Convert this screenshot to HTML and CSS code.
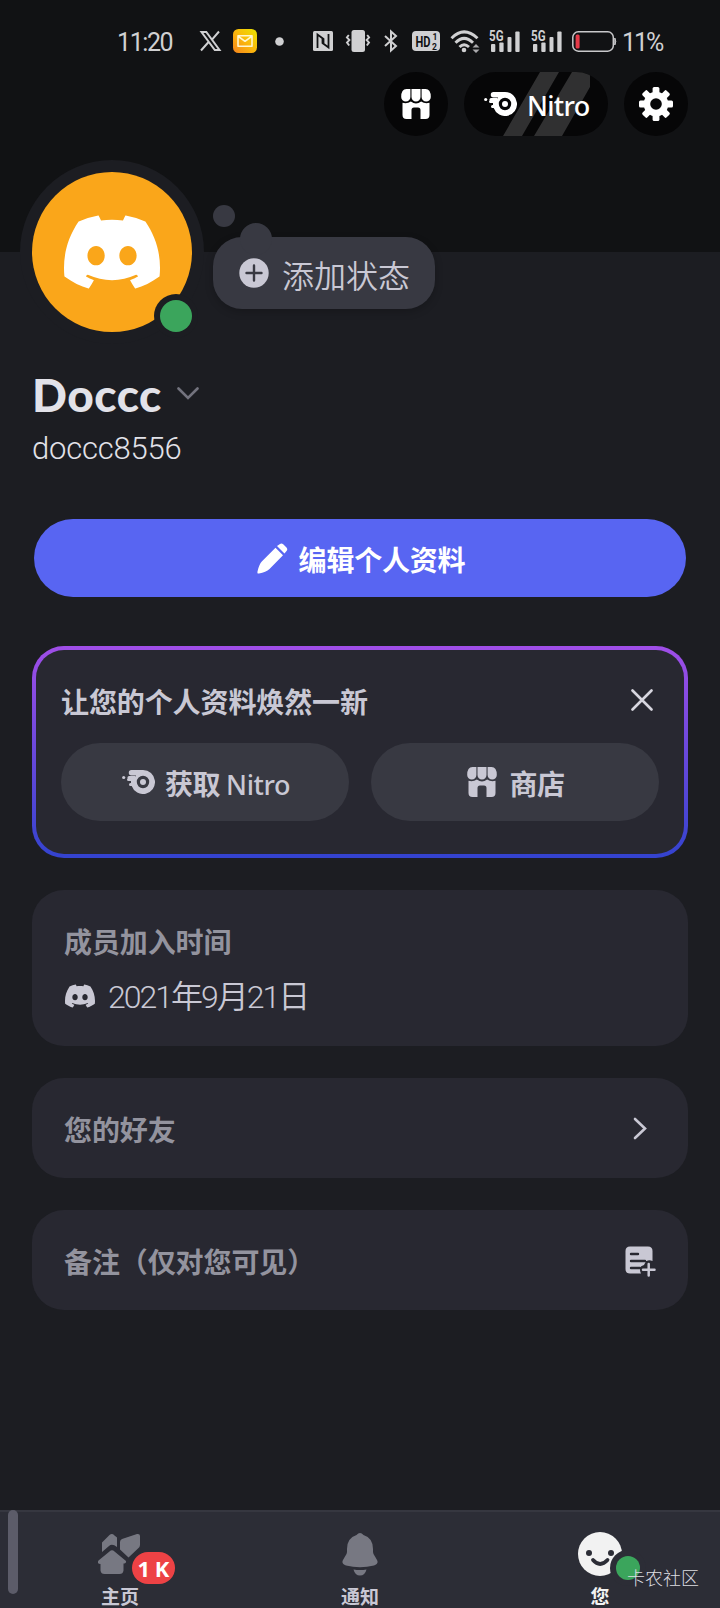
FILE: index.html
```html
<!DOCTYPE html>
<html lang="zh-CN">
<head>
<meta charset="utf-8">
<title>Profile</title>
<link rel="stylesheet" href="styles.css">
</head>
<body>
<svg class="defs" width="0" height="0">
  <symbol id="discord" viewBox="0 0 24 24"><path d="M20.317 4.3698a19.7913 19.7913 0 00-4.8851-1.5152.0741.0741 0 00-.0785.0371c-.211.3753-.4447.8648-.6083 1.2495-1.8447-.2762-3.68-.2762-5.4868 0-.1636-.3933-.4058-.8742-.6177-1.2495a.077.077 0 00-.0785-.037 19.7363 19.7363 0 00-4.8852 1.515.0699.0699 0 00-.0321.0277C.5334 9.0458-.319 13.5799.0992 18.0578a.0824.0824 0 00.0312.0561c2.0528 1.5076 4.0413 2.4228 5.9929 3.0294a.0777.0777 0 00.0842-.0276c.4616-.6304.8731-1.2952 1.226-1.9942a.076.076 0 00-.0416-.1057c-.6528-.2476-1.2743-.5495-1.8722-.8923a.077.077 0 01-.0076-.1277c.1258-.0943.2517-.1923.3718-.2914a.0743.0743 0 01.0776-.0105c3.9278 1.7933 8.18 1.7933 12.0614 0a.0739.0739 0 01.0785.0095c.1202.099.246.1981.3728.2924a.077.077 0 01-.0066.1276 12.2986 12.2986 0 01-1.873.8914.0766.0766 0 00-.0407.1067c.3604.698.7719 1.3628 1.225 1.9932a.076.076 0 00.0842.0286c1.961-.6067 3.9495-1.5219 6.0023-3.0294a.077.077 0 00.0313-.0552c.5004-5.177-.8382-9.6739-3.5485-13.6604a.061.061 0 00-.0312-.0286zM8.02 15.3312c-1.1825 0-2.1569-1.0857-2.1569-2.419 0-1.3332.9555-2.4189 2.157-2.4189 1.2108 0 2.1757 1.0952 2.1568 2.419 0 1.3332-.9555 2.4189-2.1569 2.4189zm7.9748 0c-1.1825 0-2.1569-1.0857-2.1569-2.419 0-1.3332.9554-2.4189 2.1569-2.4189 1.2108 0 2.1757 1.0952 2.1568 2.419 0 1.3332-.946 2.4189-2.1568 2.4189Z"/></symbol>
  <symbol id="store" viewBox="0 0 30 30"><path d="M5.500 0H9.400V8A4.600 4.600 0 0 1 .2 8Q.2 0 5.500 0ZM10.500 0H19.500V8A4.500 4.500 0 0 1 10.500 8ZM24.500 0H20.600V8A4.600 4.600 0 0 0 29.800 8Q29.800 0 24.500 0Z"/><path d="M1.500 13.700Q6 15 9.900 12.500 15 16.500 20.100 12.500 24 15 28.500 13.700V26Q28.500 30 24.500 30H19.500V21Q19.500 18.500 17 18.500H13Q10.500 18.500 10.500 21V30H5.500Q1.500 30 1.500 26Z"/></symbol>
  <symbol id="nitro" viewBox="0 0 33 24"><path fill-rule="evenodd" d="M9.500 0H21A12 12 0 1 1 9.700 16H8.500A1.500 1.500 0 0 1 8.500 13H9V11H6.500A1.500 1.500 0 0 1 6.500 8H14V5.500H9.500A2.700 2.700 0 0 1 9.500 0ZM21 5.800A6.200 6.200 0 1 0 21 18.200 6.200 6.200 0 1 0 21 5.800Z"/><circle cx="21" cy="12" r="3"/><circle cx="1.700" cy="7.500" r="1.600"/><rect x="5.500" y="6" width="9" height="3" rx="1.500"/></symbol>
  <symbol id="bars" viewBox="0 0 31 22"><rect x="2" y="14" width="4.300" height="8" rx="1"/><rect x="10.300" y="12.500" width="4.300" height="9.500" rx="1"/><rect x="18.500" y="7" width="4" height="15" rx="1"/><rect x="26.300" y="1.500" width="4.300" height="20.500" rx="1"/></symbol>
</svg>
<div class="page">
  <header class="statusbar">
    <span class="time">11:20</span>
    <svg class="i-x" width="21" height="20" viewBox="0 0 21 20"><path d="M1.500 1H6.300L19.500 19H14.800ZM19 .5 12 8.600M1 19.500 8.600 11" fill="none" stroke="currentColor" stroke-width="2"/></svg>
    <svg class="i-mail" width="24" height="24" viewBox="0 0 24 24"><defs><linearGradient id="mailfill" x1="1" y1="0" x2="0" y2="1"><stop offset="0" stop-color="#e9e500"/><stop offset=".5" stop-color="#fbb80c"/><stop offset="1" stop-color="#f4831c"/></linearGradient></defs><rect width="24" height="24" rx="5.500" fill="url(#mailfill)"/><path d="M5 6.800H19V17.200H5ZM5.500 7.500 12 12.300 18.500 7.500" fill="none" stroke="#fff6cf" stroke-width="1.600" stroke-linejoin="round"/></svg>
    <svg class="i-dot" width="9" height="9"><circle cx="4.500" cy="4.500" r="4.300" fill="currentColor"/></svg>
    <svg class="i-nfc" width="20" height="20" viewBox="0 0 20 20"><rect width="20" height="20" rx="1.500" fill="currentColor"/><path d="M4.500 17V3.500L10.500 8V13.500M15.500 3V16.500L9.500 12V6.500" fill="none" stroke="#111214" stroke-width="1.800"/></svg>
    <svg class="i-vib" width="24" height="22" viewBox="0 0 24 22"><rect x="5.500" width="13.500" height="22" rx="2.500" fill="currentColor"/><path d="M2.800 5 .9 7.500 3.400 10 1 12.500 3.200 15.500M21.200 5 23.100 7.500 20.600 10 23 12.500 20.800 15.500" fill="none" stroke="currentColor" stroke-width="1.900"/></svg>
    <svg class="i-bt" width="14" height="22" viewBox="0 0 14 22"><path d="M1 6 12 16 7 20.500V1.500L12 6 1 16" fill="none" stroke="currentColor" stroke-width="2"/></svg>
    <svg class="i-hd" width="28" height="20" viewBox="0 0 28 20"><rect width="28" height="20" rx="4" fill="currentColor"/><g fill="#111214"><text class="hd-text" x="3.500" y="15.500" textLength="15" lengthAdjust="spacingAndGlyphs">HD</text><text class="hd-num" x="20.500" y="8.500">1</text><text class="hd-num" x="20" y="18.500">2</text></g></svg>
    <svg class="i-wifi" width="30" height="23" viewBox="0 0 30 23"><g fill="none" stroke="currentColor" stroke-width="2.900"><path d="M1.500 8.200Q14-4.500 27.500 8.200M5.500 12.700Q14 4 23 12.700M9.500 17Q14 12.500 19 17"/></g><circle cx="14" cy="20" r="2.300" fill="currentColor"/><path d="M26 14 29.500 17.500H22.500ZM26 23 29.500 19.500H22.500Z" fill="#aaa9ac"/></svg>
    <svg class="i-sig1" width="31" height="22" fill="currentColor"><use href="#bars"/><text class="signal-text" x="0" y="10.500" textLength="14.500" lengthAdjust="spacingAndGlyphs">5G</text></svg>
    <svg class="i-sig2" width="31" height="22" fill="currentColor"><use href="#bars"/><text class="signal-text" x="0" y="10.500" textLength="14.500" lengthAdjust="spacingAndGlyphs">5G</text></svg>
    <svg class="i-bat" width="45" height="21" viewBox="0 0 45 21"><rect x=".8" y=".8" width="40.500" height="19.400" rx="5.500" fill="none" stroke="#c9c9cb" stroke-width="1.500"/><rect x="3.600" y="3.500" width="4" height="14" rx="1.500" fill="#e53a48"/><path d="M42.800 7Q44.800 10.500 42.800 14Z" fill="#c9c9cb" stroke="#c9c9cb"/></svg>
    <span class="percent">11%</span>
  </header>

  <nav class="actions">
    <button class="round"><svg width="30" height="30"><use href="#store"/></svg></button>
    <button class="nitro">
      <svg class="stripes" width="144" height="64"><path d="M76 0H95L58 64H39ZM108 0H126V15L98 64H70Z" fill="#303031"/></svg>
      <svg class="nitro-icon" width="33" height="24"><use href="#nitro"/></svg><span>Nitro</span>
    </button>
    <button class="round"><svg width="34" height="34" viewBox="0 0 34 34"><g transform="translate(17 17)"><g id="teeth"><rect x="-3.400" y="-17" width="6.800" height="34" rx="1.500"/><rect x="-17" y="-3.400" width="34" height="6.800" rx="1.500"/></g><use href="#teeth" transform="rotate(45)"/><circle r="12.300"/><circle r="5.800" fill="#060607"/></g></svg></button>
  </nav>

  <section class="identity">
    <div class="avatar"><svg width="96" height="96"><use href="#discord"/></svg><i class="online"></i></div>
    <div class="bubble"><i class="puff small"></i><i class="puff large"></i>
      <svg width="30" height="30" viewBox="0 0 30 30"><circle cx="15" cy="15" r="14.700" fill="#c9c8d4"/><path d="M15 7.500V22.500M7.500 15H22.500" stroke="#383942" stroke-width="2.400" stroke-linecap="round"/></svg><span>添加状态</span></div>
  </section>

  <section class="names">
    <h1><span>Doccc</span><svg width="22" height="13" viewBox="0 0 22 13"><path d="M1.500 1.500 11 11 20.500 1.500" fill="none" stroke="#73737e" stroke-width="2.600" stroke-linecap="round"/></svg></h1>
    <p>doccc8556</p>
  </section>

  <button class="edit"><svg width="31" height="31" viewBox="0 0 31 31"><path d="M20 3 23 1Q24.500-.2 26.500 1.500L29.500 4.500Q31 6.500 29.500 8L27.500 10.500ZM18.500 4.800 26 12.300 12.500 26Q9 29 2 30.500 0 31 .5 28.500 2 21.500 5 18.300Z"/></svg><span>编辑个人资料</span></button>

  <section class="promo">
    <div class="promo-head"><h2>让您的个人资料焕然一新</h2><svg width="22" height="22" viewBox="0 0 22 22"><path d="M1.500 1.500 20.500 20.500M20.500 1.500 1.500 20.500" stroke="#d7d6df" stroke-width="2.600" stroke-linecap="round"/></svg></div>
    <div class="promo-buttons">
      <button><svg width="33" height="24"><use href="#nitro"/></svg><span>获取 <b>Nitro</b></span></button>
      <button class="shop"><svg width="30" height="30"><use href="#store"/></svg><span>商店</span></button>
    </div>
  </section>

  <section class="card member">
    <h2>成员加入时间</h2>
    <p><svg width="30" height="30"><use href="#discord"/></svg><span>2021年9月21日</span></p>
  </section>
  <section class="card line"><h2>您的好友</h2><svg class="chevron" width="14" height="23" viewBox="0 0 14 23"><path d="M2 2 12 11.500 2 21" fill="none" stroke="#c9c8d4" stroke-width="2.600" stroke-linecap="round"/></svg></section>
  <section class="card line"><h2>备注（仅对您可见）</h2><svg class="note" width="31" height="31" viewBox="0 0 31 31"><path d="M5 .5H23Q27.500.5 27.500 5V15Q21.500 12.500 19 19 13 21 16 27.500H5Q.5 27.500.5 23V5Q.5.5 5 .5Z" fill="#c9c8d4"/><path d="M6 8H13M6 15H20M6 22H15" stroke="#282831" stroke-width="2.400" stroke-linecap="round"/><path d="M23.700 15V31M16 23.500H31" stroke="#282831" stroke-width="6"/><path d="M23.700 18V29.500M18 23.700H29.500" stroke="#c9c8d4" stroke-width="2.500" stroke-linecap="round"/></svg></section>

  <footer class="tabs">
    <i class="scroll"></i>
    <div class="tab"><svg width="44" height="44" viewBox="0 0 44 44" fill="#777882"><path d="M4 10.500 11.500 3Q14 1 16.500 3.500L19 5.500V15Q14 11 11 14L4 20Z"/><path d="M22 10Q22 8 24 7L39 2Q42 1.500 42 4V13Q42 15 40 16.500L30.500 25.500 22 17.500Z"/><path d="M11.500 19.500Q14 17 16.500 19.500L28 29Q28.500 32 25.500 31.500V38.500Q25 42 21.500 42H6.500Q3 42 2.500 38.500V32Q-1.500 32 .5 28.500Z"/></svg><span>主页</span><b class="badge">1 K</b></div>
    <div class="tab"><svg width="36" height="44" viewBox="0 0 36 44" fill="#777882"><path d="M14.500 3Q18-1 21.500 3 31 6 31 17V20Q31 22 33 24.500L35 28Q37 32 32 33.500 18 37 4 33.500-1 32 1 28L3 24.500Q5 22 5 20V17Q5 6 14.500 3ZM11.500 37.500Q18 38.500 24.500 37.500 23 43.500 18 43.500T11.500 37.500Z"/></svg><span>通知</span></div>
    <div class="tab active"><svg width="44" height="44" viewBox="0 0 44 44"><circle cx="22" cy="22" r="22" fill="#f2f2f2"/><circle cx="11" cy="21" r="3" fill="#2c2d36"/><circle cx="33" cy="21" r="3" fill="#2c2d36"/><path d="M15 28Q22 36 29.500 28" fill="none" stroke="#2c2d36" stroke-width="3.800" stroke-linecap="round"/></svg><span>您</span><i class="online mini"></i></div>
    <span class="mark">卡农社区</span>
  </footer>
</div>
</body>
</html>
```
FILE: styles.css
```css
* { box-sizing: border-box; }
body { margin: 0; background: #1c1d22; color: #c9c8d4; font-family: "Noto Sans CJK SC", sans-serif; }
h1, h2, p { margin: 0; }
button { border: 0; padding: 0; font: inherit; color: inherit; }
svg { display: block; flex: none; }
.defs { position: absolute; }
.page { width: 720px; height: 1608px; display: flex; flex-direction: column; overflow: hidden; background: linear-gradient(#111214 252px, #1c1d22 252px); }

.statusbar { height: 72px; padding: 10px 0 0 117px; display: flex; align-items: center; color: #d0d0d2; flex: none; }
.statusbar svg { color: #d0d0d2; overflow: visible; }
.time, .percent { font: 25px/30px Roboto, sans-serif; white-space: nowrap; padding-top: 3px; }
.time { width: 56px; letter-spacing: -1.4px; }
.percent { margin-left: 5px; letter-spacing: -2px; }
.i-x { margin-left: 27px; }
.i-mail { margin-left: 12px; }
.i-dot { margin-left: 18px; }
.i-nfc { margin-left: 29px; }
.i-vib { margin-left: 13px; }
.i-bt { margin-left: 14px; }
.i-hd { margin-left: 14px; }
.i-wifi { margin-left: 10px; }
.i-sig1 { margin-left: 9px; }
.i-sig2 { margin-left: 11px; }
.i-bat { margin-left: 10px; }
.signal-text { font: 700 14px Roboto, sans-serif; }
.hd-text { font: 700 14px Roboto, sans-serif; }
.hd-num { font: 700 8.5px/9px Roboto, sans-serif; }

.actions { display: flex; justify-content: flex-end; gap: 16px; padding-right: 32px; height: 64px; flex: none; }
.actions button { height: 64px; border-radius: 32px; background: #060607; color: #fff; fill: #fff; display: flex; align-items: center; justify-content: center; }
.actions .round { width: 64px; }
.actions .nitro { width: 144px; position: relative; overflow: hidden; font: 500 27px/36px "Noto Sans", sans-serif; justify-content: flex-start; padding-left: 20px; gap: 10px; }
.nitro span { position: relative; top: 2px; letter-spacing: -.7px; }
.nitro-icon { position: relative; }
.stripes { position: absolute; left: 0; top: 0; }

.identity { display: flex; align-items: flex-start; padding: 36px 32px 0; height: 196px; flex: none; }
.avatar { width: 160px; height: 160px; border-radius: 50%; background: #faa61a; box-shadow: 0 0 0 12px #1c1d22; fill: #fff; display: flex; align-items: center; justify-content: center; position: relative; }
.online { position: absolute; right: 0; bottom: 0; width: 32px; height: 32px; border-radius: 50%; background: #3ba55c; box-shadow: 0 0 0 6px #1c1d22; }
.bubble { position: relative; margin: 65px 0 0 21px; width: 222px; height: 72px; border-radius: 29px; background: #383942; display: flex; align-items: center; gap: 13px; padding-left: 26px; font-size: 32px; font-weight: 350; box-shadow: 0 3px 8px rgba(0,0,0,.2); }
.bubble span { line-height: 40px; padding-top: 2px; }
.puff { position: absolute; border-radius: 50%; background: #383942; }
.puff.small { width: 22px; height: 22px; left: 0; top: -32px; }
.puff.large { width: 32px; height: 32px; left: 27px; top: -14px; }

.names { padding: 38px 32px 0; height: 187px; flex: none; }
.names h1 { display: flex; align-items: center; gap: 15px; font: 900 46px/50px Lato, sans-serif; letter-spacing: .5px; color: #e2e2e9; }
.names h1 svg { margin-bottom: 4px; }
.names p { font: 300 31px/38px Roboto, sans-serif; letter-spacing: -.2px; color: #e2e2e9; margin-top: 10px; }

.edit { margin: 0 34px; height: 78px; border-radius: 39px; background: #5865f2; color: #fff; fill: #fff; display: flex; align-items: center; justify-content: center; gap: 11px; font-size: 28px; font-weight: 700; padding-left: 2px; flex: none; }
.edit span { padding-top: 2px; letter-spacing: -.2px; }

.promo { margin: 49px 32px 0; height: 212px; border: 4px solid transparent; border-radius: 32px; background: linear-gradient(#282831, #282831) padding-box, linear-gradient(#a04ee8, #3443cf) border-box; padding: 29px 25px 0; flex: none; }
.promo-head { display: flex; justify-content: space-between; align-items: center; height: 42px; padding-right: 6px; }
.promo-head h2 { padding-top: 1px; }
h2 { font-size: 28px; line-height: 40px; font-weight: 700; letter-spacing: -.1px; white-space: nowrap; }
.promo-buttons { display: grid; grid-template-columns: 288px 288px; gap: 22px; margin-top: 22px; }
.promo-buttons button { height: 78px; border-radius: 39px; background: #383942; display: flex; align-items: center; justify-content: center; gap: 10px; font-size: 28px; font-weight: 700; fill: #c9c8d4; padding-left: 2px; }
.promo-buttons span { white-space: nowrap; letter-spacing: -.4px; padding-top: 1px; }
.promo-buttons b { font: 500 27px "Noto Sans", sans-serif; }
.promo-buttons .shop { gap: 12px; }

.card { margin: 32px 32px 0; border-radius: 32px; background: #282831; flex: none; padding: 0 32px; }
.card h2 { color: #93939e; }
.member { height: 156px; padding-top: 31px; }
.member p { display: flex; align-items: center; gap: 13px; margin-top: 12px; padding-left: 1px; font: 350 32px/44px Roboto, "Noto Sans CJK SC", sans-serif; letter-spacing: -2px; fill: #c9c8d4; }
.member span { padding-top: 2px; }
.line { height: 100px; display: flex; align-items: center; justify-content: space-between; }
.line h2 { padding-top: 1px; }
.line .chevron { margin-right: 9px; }
.note { margin: 2px 0 0; }

.tabs { margin-top: auto; height: 98px; border-top: 2px solid #363740; background: #2c2d36; display: grid; grid-template-columns: repeat(3, 240px); position: relative; flex: none; }
.scroll { position: absolute; left: 8px; top: -2px; width: 10px; height: 84px; border-radius: 5px; background: #5c5c69; }
.tab { position: relative; padding-top: 20px; display: flex; flex-direction: column; align-items: center; font-size: 19px; font-weight: 700; line-height: 22px; }
.tab span { margin-top: 9px; }
.tab.active { color: #f2f2f2; }
.badge { position: absolute; left: 132px; top: 40px; width: 43px; height: 32px; border-radius: 16px; background: #ed4245; color: #fff; font: 700 22px/32px "Noto Sans", sans-serif; text-align: center; word-spacing: -1px; white-space: nowrap; }
.mini { left: 136px; top: 44px; width: 24px; height: 24px; box-shadow: 0 0 0 6px #2c2d36; }
.mark { position: absolute; left: 627px; top: 53px; font-size: 18px; line-height: 24px; font-weight: 300; color: #dedee2; }
```
